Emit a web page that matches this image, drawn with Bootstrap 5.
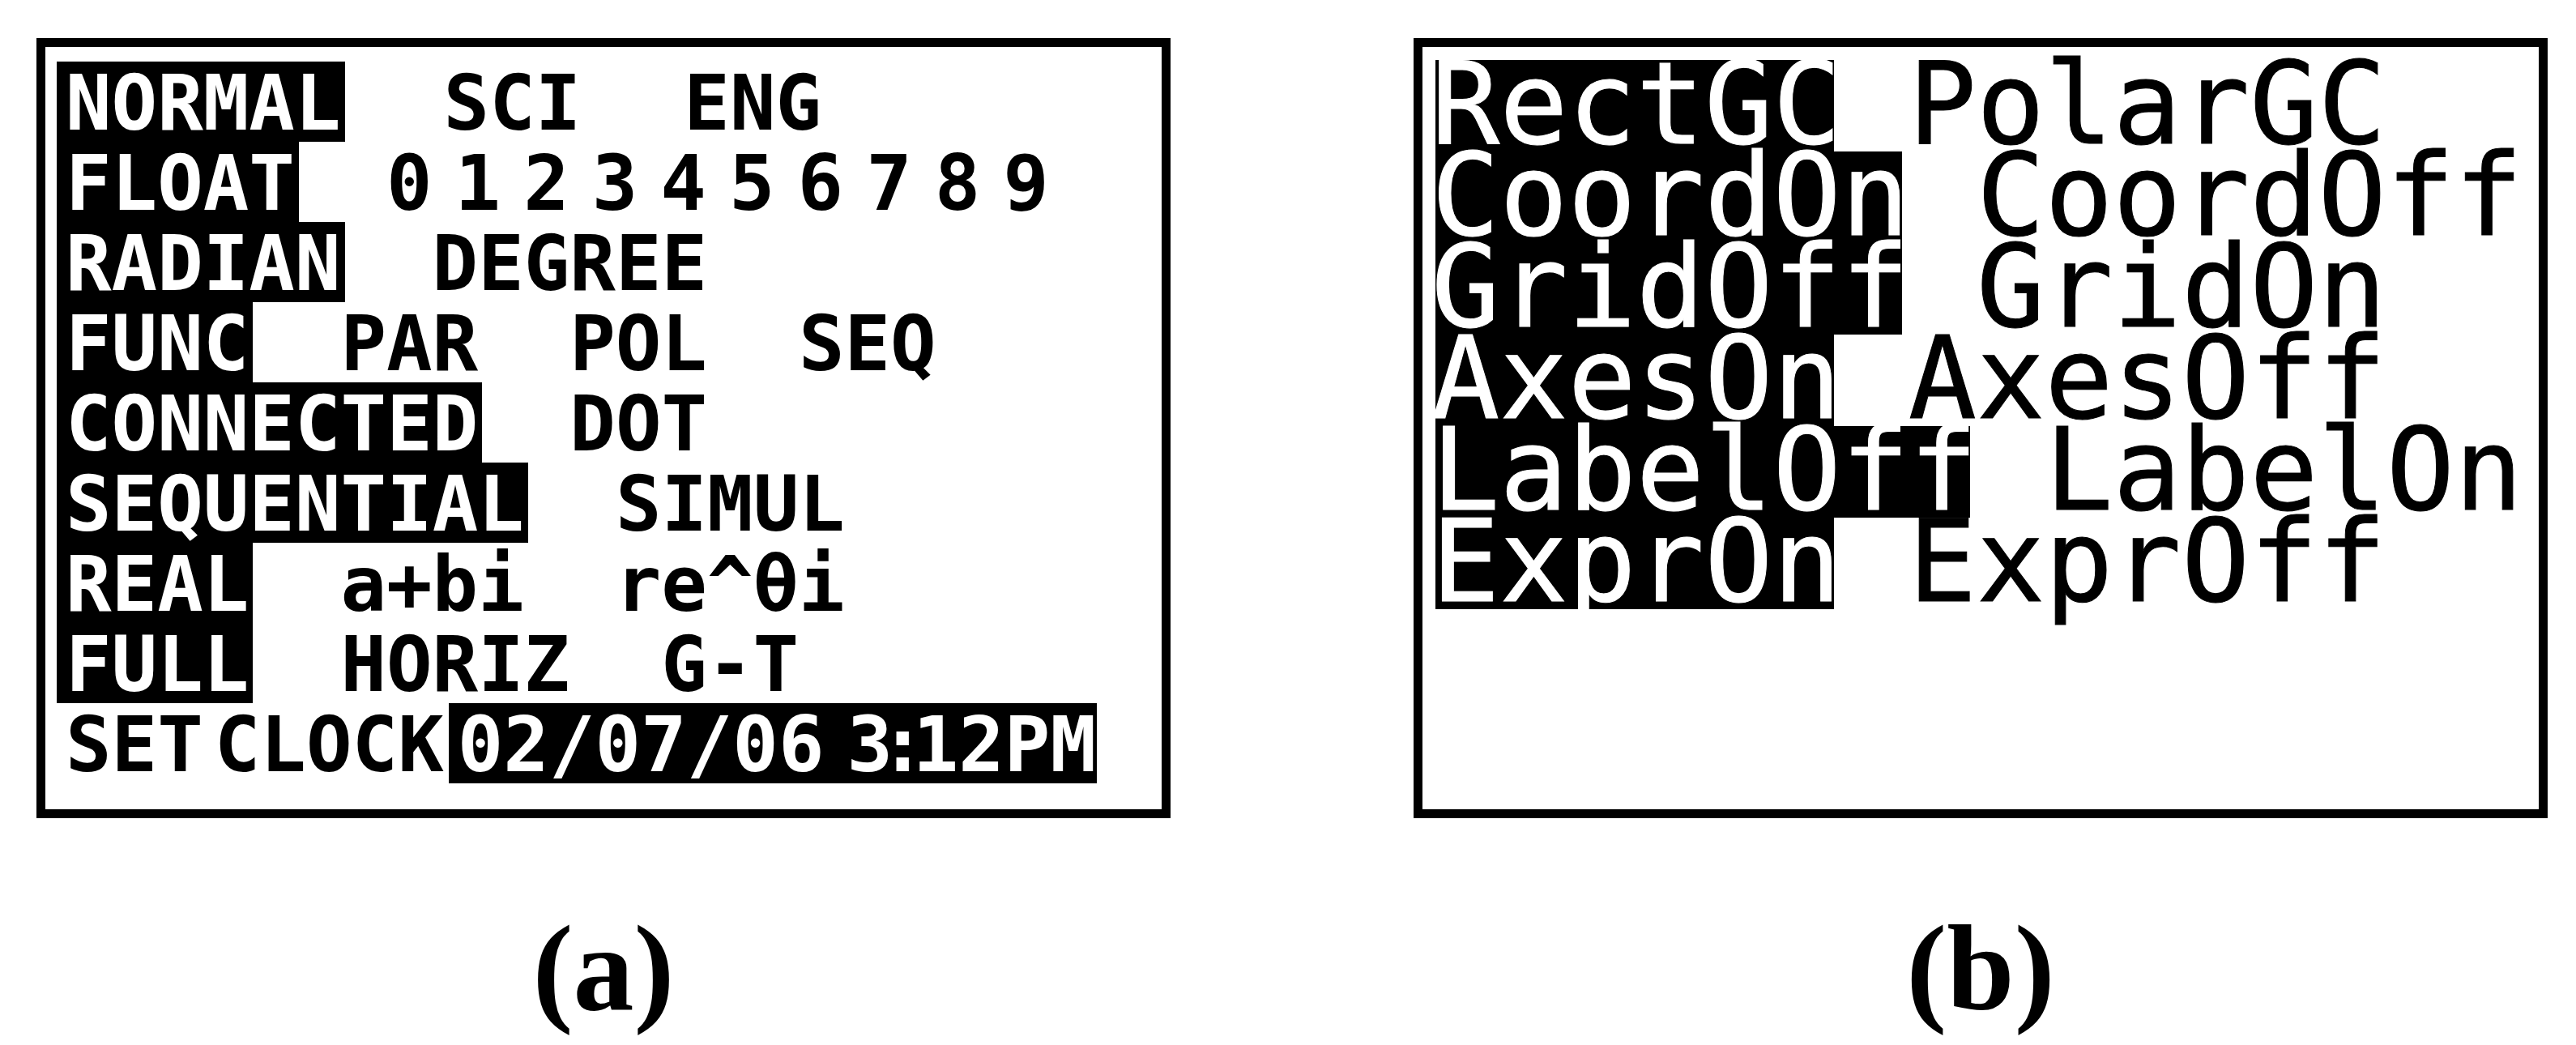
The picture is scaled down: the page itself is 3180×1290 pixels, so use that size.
<!DOCTYPE html>
<html lang="en">
<head>
<meta charset="utf-8">
<meta name="viewport" content="width=device-width, initial-scale=1">
<title>Calculator mode and format screens</title>
<link href="https://cdn.jsdelivr.net/npm/bootstrap@5.3.0/dist/css/bootstrap.min.css" rel="stylesheet">
<style>
  body { background: #fff; color: #000; }
  .plates { padding: 47px 35px 0 45px; gap: 300px; }
  .plate { flex: 1 1 0; min-width: 0; }
  .lcd {
    border: 11px solid #000;
    min-height: 963px;
    font-family: "DejaVu Sans Mono", "Liberation Mono", monospace;
    white-space: nowrap;
  }
  .lcd ul { list-style: none; }
  .picked { background: #000; color: #fff; }

  /* mode screen: small bold type */
  .lcd-mode { padding: 18px 14px; font-size: 94px; font-weight: 700; line-height: 94px; }
  .lcd-mode li { gap: 113px; }
  .lcd-mode li > * { padding-top: 5px; }
  .lcd-mode .picked { padding-left: 11px; padding-right: 5px; margin-right: -5px; }
  .lcd-mode .wide-gap { gap: 127px; }
  .lcd-mode .digits { gap: 28px; }
  .lcd-mode .clock-line { gap: 14px; padding-left: 11px; }
  .lcd-mode .clock-line .picked { gap: 28px; margin-left: -8px; padding-right: 1px; }
  .colon { margin: 0 -16px; }

  /* format screen: large regular type */
  .lcd-format { padding: 16px; font-size: 140px; line-height: 103px; -webkit-text-stroke: 1px currentColor; }
  .lcd-format li { gap: 92px; }
  .lcd-format li > * { padding-top: 3px; padding-bottom: 7px; }
  .lcd-format .picked > span { margin: 0 -9px 0 -5px; }

  figcaption {
    margin-top: 110px;
    font-family: "Liberation Serif", "Times New Roman", serif;
    font-size: 150px;
    font-weight: 700;
    line-height: 150px;
  }
</style>
</head>
<body>
<main class="plates d-flex align-items-start min-vh-100">
  <figure class="plate m-0">
    <div class="lcd lcd-mode">
      <ul class="m-0 p-0 d-flex flex-column">
        <li class="d-flex wide-gap"><span class="picked">NORMAL</span><span>SCI</span><span>ENG</span></li>
        <li class="d-flex"><span class="picked">FLOAT</span>
          <span class="digits d-flex"><span>0</span><span>1</span><span>2</span><span>3</span><span>4</span><span>5</span><span>6</span><span>7</span><span>8</span><span>9</span></span></li>
        <li class="d-flex"><span class="picked">RADIAN</span><span>DEGREE</span></li>
        <li class="d-flex"><span class="picked">FUNC</span><span>PAR</span><span>POL</span><span>SEQ</span></li>
        <li class="d-flex"><span class="picked">CONNECTED</span><span>DOT</span></li>
        <li class="d-flex"><span class="picked">SEQUENTIAL</span><span>SIMUL</span></li>
        <li class="d-flex"><span class="picked">REAL</span><span>a+bi</span><span>re^θi</span></li>
        <li class="d-flex"><span class="picked">FULL</span><span>HORIZ</span><span>G-T</span></li>
        <li class="d-flex clock-line"><span>SET</span><span>CLOCK</span>
          <span class="picked d-flex"><span>02/07/06</span><span>3<span class="colon">:</span>12PM</span></span></li>
      </ul>
    </div>
    <figcaption class="text-center">(a)</figcaption>
  </figure>

  <figure class="plate m-0">
    <div class="lcd lcd-format">
      <ul class="m-0 p-0 d-flex flex-column">
        <li class="d-flex"><span class="picked"><span>RectGC</span></span><span>PolarGC</span></li>
        <li class="d-flex"><span class="picked"><span>CoordOn</span></span><span>CoordOff</span></li>
        <li class="d-flex"><span class="picked"><span>GridOff</span></span><span>GridOn</span></li>
        <li class="d-flex"><span class="picked"><span>AxesOn</span></span><span>AxesOff</span></li>
        <li class="d-flex"><span class="picked"><span>LabelOff</span></span><span>LabelOn</span></li>
        <li class="d-flex"><span class="picked"><span>ExprOn</span></span><span>ExprOff</span></li>
      </ul>
    </div>
    <figcaption class="text-center">(b)</figcaption>
  </figure>
</main>
<script src="https://cdn.jsdelivr.net/npm/bootstrap@5.3.0/dist/js/bootstrap.bundle.min.js"></script>
</body>
</html>
